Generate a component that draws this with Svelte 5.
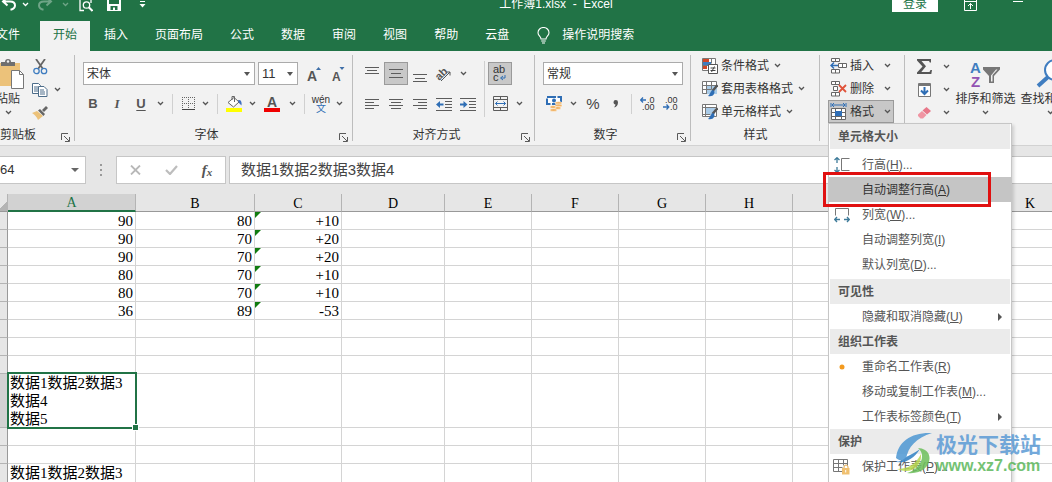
<script>
  const tabs = ['文件', '开始', '插入', '页面布局', '公式', '数据', '审阅', '视图', '帮助', '云盘'];
  let activeTab = $state('开始');
  let formula = $state('数据1数据2数据3数据4');
  let nameBox = $state('64');

  const columns = [
    { name: 'A', width: 128 },
    { name: 'B', width: 119 },
    { name: 'C', width: 87 },
    { name: 'D', width: 103 },
    { name: 'E', width: 87 },
    { name: 'F', width: 87 },
    { name: 'G', width: 87 },
    { name: 'H', width: 87 },
    { name: 'I', width: 107 },
    { name: 'J', width: 87 },
    { name: 'K', width: 87 }
  ];
  const tableWidth = columns.reduce((sum, c) => sum + c.width, 8);

  const rows = [
    ['90', '80', '+10'],
    ['90', '70', '+20'],
    ['90', '70', '+20'],
    ['80', '70', '+10'],
    ['80', '70', '+10'],
    ['36', '89', '-53'],
    [],
    [],
    [],
    ['数据1数据2数据3\n数据4\n数据5'],
    [],
    [],
    ['数据1数据2数据3\n数据4']
  ];
  const selectedRow = 9;

  const menu = [
    {
      title: '单元格大小',
      items: [
        { text: '行高', key: 'H', more: true, icon: 'rowHeight' },
        { text: '自动调整行高', key: 'A', hot: true },
        { text: '列宽', key: 'W', more: true, icon: 'colWidth' },
        { text: '自动调整列宽', key: 'I' },
        { text: '默认列宽', key: 'D', more: true }
      ]
    },
    { title: '可见性', items: [{ text: '隐藏和取消隐藏', key: 'U', sub: true }] },
    {
      title: '组织工作表',
      items: [
        { text: '重命名工作表', key: 'R', icon: 'dot' },
        { text: '移动或复制工作表', key: 'M', more: true },
        { text: '工作表标签颜色', key: 'T', sub: true }
      ]
    },
    { title: '保护', items: [{ text: '保护工作表', key: 'P', more: true, icon: 'protect' }] }
  ];
</script>

{#snippet chev()}
  <svg class="chev" width="7" height="5" viewBox="0 0 7 5"><path d="M1 1l2.5 2.5L6 1" fill="none" stroke="currentColor" stroke-width="1.3" /></svg>
{/snippet}

{#snippet drop(label)}
  <button class="drop" aria-label={label}>{@render chev()}</button>
{/snippet}

{#snippet lines(list)}
  <svg width="16" height="16" viewBox="0 0 16 16" shape-rendering="crispEdges">
    {#each list as [x, y, w]}
      <rect {x} {y} width={w} height="1" fill="#5c5c5c" />
    {/each}
  </svg>
{/snippet}

{#snippet footer(text, launcher)}
  <div class="footer">
    <span>{text}</span>
    {#if launcher}
      <button class="launcher" aria-label="{text}设置">
        <svg width="9" height="9" viewBox="0 0 9 9" fill="none" stroke="#5a5a5a"><path d="M.5 7V.5H7M3 3l5 5M8.500 4v4.500H4" /></svg>
      </button>
    {/if}
  </div>
{/snippet}

<div class="app">
  <header class="titlebar">
    <div class="titlerow">
      <div class="qat">
        <button class="w18" aria-label="撤消">
          <svg width="16" height="14" viewBox="0 0 16 14" fill="none" stroke="#fff" stroke-width="2"><path d="M6 .5L2 4.500l4.500 4M2.500 4.500H9c3 0 5 1.500 5 4 0 2-1.500 3.500-4.500 4.200" /></svg>
        </button>
        <button class="drop" aria-label="撤消列表">{@render chev()}</button>
        <button class="w26 dim" aria-label="恢复">
          <svg width="16" height="14" viewBox="0 0 16 14" fill="none" stroke="#fff" stroke-width="2"><path d="M10 .5l4 4-4.500 4M13.500 4.500H7c-3 0-5 1.500-5 4 0 2 1.500 3.500 4.500 4.200" /></svg>
        </button>
        <button class="drop dim" aria-label="恢复列表">{@render chev()}</button>
        <button class="w28" aria-label="打印预览">
          <svg width="14" height="16" viewBox="0 0 14 16" fill="none" stroke="#fff" stroke-width="1.300"><path d="M5 14.500H1V1h11v6" /><circle cx="7.500" cy="9" r="3.200" /><path d="M10 11.500l3.500 3.500" stroke-width="2" /></svg>
        </button>
        <button class="w28" aria-label="保存">
          <svg width="14" height="14" viewBox="0 0 14 14"><path d="M0 0h14v14H0zM2 1.500v5.500h10V1.500zM3.500 9v4H6v-2.500h2V13h2.500V9z" fill="#fff" fill-rule="evenodd" /></svg>
        </button>
        <button class="w28" aria-label="自定义快速访问工具栏">
          <svg width="7" height="7" viewBox="0 0 7 7" fill="#fff"><path d="M1 0h5v1H1zM.5 3h6l-3 3.500z" /></svg>
        </button>
      </div>
      <h1>工作簿1.xlsx&nbsp; -&nbsp; Excel</h1>
      <div class="winctl">
        <button class="login">登录</button>
        <button class="win" aria-label="功能区显示选项">
          <svg width="13" height="13" viewBox="0 0 13 13" fill="none" stroke="#fff"><path d="M.5.5h12v12H.5zM.5 3.500h12M6.500 11V5.500M4 8l2.500-2.500L9 8" /></svg>
        </button>
        <button class="win min" aria-label="最小化"><svg width="10" height="1" viewBox="0 0 10 1"><path d="M0 0h10v1H0z" fill="#fff" /></svg></button>
      </div>
    </div>
  </header>

  <nav class="tabs">
    {#each tabs as tab, i}
      <button class:active={tab === activeTab} class:file={i === 0} onclick={() => (activeTab = tab)}>{tab}</button>
    {/each}
    <button class="tell">
      <svg width="13" height="17" viewBox="0 0 13 17" fill="none" stroke="#fff" stroke-width="1.100"><path d="M4 12c0-2.500-3-3.200-3-6.300a5.500 5.200 0 0 1 11 0c0 3.100-3 3.800-3 6.300zM4.200 14h4.600M5 16h3" /></svg>
      <span>操作说明搜索</span>
    </button>
  </nav>

  <section class="ribbon">
    <div class="group clipboard">
      <div class="cols">
        <button class="big paste">
          <svg width="36" height="31" viewBox="0 0 36 31">
            <path d="M3 4h27v23H3z" fill="#ecc27a" />
            <path d="M11 6V3h4a3 3 0 0 1 6 0h4v4H11z" fill="#6f6f6f" /><circle cx="18" cy="2.500" r="1.200" fill="#f2f2f2" />
            <path d="M21.500 11.500h8l4 4v14h-12z" fill="#fff" stroke="#777" /><path d="M29.500 11.500v4h4" fill="none" stroke="#777" />
          </svg>
          <span>粘贴</span>
          {@render chev()}
        </button>
        <div class="stack">
          <div class="line">
            <button class="w20" aria-label="剪切">
              <svg width="15" height="16" viewBox="0 0 15 16" fill="none"><path d="M3 0l7 10M12 0L5 10" stroke="#666" stroke-width="1.800" /><circle cx="3.500" cy="12" r="2.700" stroke="#3f7dc0" stroke-width="1.300" /><circle cx="11" cy="12" r="2.700" stroke="#3f7dc0" stroke-width="1.300" /></svg>
            </button>
          </div>
          <div class="line">
            <button class="w20" aria-label="复制">
              <svg width="16" height="14" viewBox="0 0 16 14" fill="#fff" stroke="#4d6d8a"><path d="M.5.5h6l2 2v8h-8z" /><path d="M2 4h4M2 6h4M2 8h4" /><path d="M6.500 3.500h5.500l3 3v7H6.500z" /><path d="M8 7h4M8 9h5M8 11h5" /></svg>
            </button>
            {@render drop('复制选项')}
          </div>
          <div class="line">
            <button class="w20" aria-label="格式刷">
              <svg width="16" height="14" viewBox="0 0 16 14"><path d="M0 7l5-2 6 5-5 4c-1-3-3-5-6-7z" fill="#ecc27a" /><path d="M6 4.500L8 3l5 5-1.500 2zM10 4l4-4 2 2-4 4z" fill="#666" /></svg>
            </button>
          </div>
        </div>
      </div>
      {@render footer('剪贴板', true)}
    </div>

    <div class="group font">
      <div class="rows">
        <div class="line selects">
          <span class="select grow"><select aria-label="字体"><option>宋体</option></select></span>
          <span class="select size"><select aria-label="字号"><option>11</option></select></span>
          <button class="w26" aria-label="增大字号">
            <svg width="16" height="16" viewBox="0 0 16 16"><text x="1" y="15" class="glyph" font-size="14">A</text><path d="M10 4l2.500-3L15 4z" fill="#3f6fa8" /></svg>
          </button>
          <button class="w22" aria-label="减小字号">
            <svg width="14" height="16" viewBox="0 0 14 16"><text x="1" y="15" class="glyph" font-size="12">A</text><path d="M8.500 1h5L11 4z" fill="#3f6fa8" /></svg>
          </button>
        </div>
        <div class="line">
          <button class="w24 letter"><b>B</b></button>
          <button class="w24 letter italic"><b>I</b></button>
          <button class="w24 letter"><b class="under">U</b></button>
          {@render drop('下划线选项')}
          <i class="sep"></i>
          <button class="w20" aria-label="边框">
            <svg width="13" height="13" viewBox="0 0 13 13" fill="none" stroke="#666" shape-rendering="crispEdges"><path d="M.5 0v12M6.500 0v12M12.500 0v12M0 .5h13M0 6.500h13" stroke-dasharray="1 1" /><path d="M0 12.500h13" stroke="#444" /></svg>
          </button>
          {@render drop('边框选项')}
          <i class="sep"></i>
          <button class="w22" aria-label="填充颜色">
            <svg width="17" height="17" viewBox="0 0 17 17"><path d="M2 7.500l6-5 5 4.500-5.500 5z" fill="#fff" stroke="#666" /><path d="M6 5V1.500h2.500V7" fill="none" stroke="#666" /><path d="M12 5c3-.5 4 1.500 3.500 5.500L13 8z" fill="#3f6fc0" /><path d="M0 13h16v4H0z" fill="#ff0" /></svg>
          </button>
          {@render drop('填充选项')}
          <button class="w26" aria-label="字体颜色">
            <svg width="16" height="17" viewBox="0 0 16 17"><text x="3" y="12" class="glyph" font-size="14">A</text><path d="M0 13h16v4H0z" fill="#f00000" /></svg>
          </button>
          {@render drop('字体颜色选项')}
          <i class="sep"></i>
          <button class="w22 pinyin"><span>wén</span><span class="wen">文</span></button>
          {@render drop('拼音选项')}
        </div>
      </div>
      {@render footer('字体', true)}
    </div>

    <div class="group align">
      <div class="cols">
        <div class="rows">
          <div class="line">
            <button class="w24" aria-label="顶端对齐">{@render lines([[1, 1, 14], [3, 4, 10], [1, 7, 14]])}</button>
            <button class="w24 toggled" aria-label="垂直居中">{@render lines([[1, 3, 14], [3, 7, 10], [1, 11, 14]])}</button>
            <button class="w24" aria-label="底端对齐">{@render lines([[1, 8, 14], [3, 12, 10], [1, 15, 14]])}</button>
            <button class="w24" aria-label="方向">
              <svg width="18" height="18" viewBox="0 0 18 18"><text x="0" y="12" transform="rotate(-45 7 9)" class="glyph" font-size="11">ab</text><path d="M6 16L15 7M11.500 7H15v3.500" fill="none" stroke="#555" /></svg>
            </button>
            {@render drop('方向选项')}
          </div>
          <div class="line">
            <button class="w24" aria-label="左对齐">{@render lines([[1, 3, 14], [1, 6, 9], [1, 9, 14], [1, 12, 9]])}</button>
            <button class="w24" aria-label="居中">{@render lines([[1, 3, 14], [3, 6, 10], [1, 9, 14], [3, 12, 10]])}</button>
            <button class="w24" aria-label="右对齐">{@render lines([[1, 3, 14], [6, 6, 9], [1, 9, 14], [6, 12, 9]])}</button>
            <button class="w24" aria-label="减少缩进量">
              <svg width="16" height="14" viewBox="0 0 16 14"><path d="M0 1.500h16M9 4.500h7M9 7.500h7M9 10.500h7M0 13.500h16" stroke="#5c5c5c" /><path d="M0 7.500l4-3.500v2.500h3.500v2H4V11z" fill="#2f6eb5" /></svg>
            </button>
            <button class="w24" aria-label="增加缩进量">
              <svg width="16" height="14" viewBox="0 0 16 14"><path d="M0 1.500h16M9 4.500h7M9 7.500h7M9 10.500h7M0 13.500h16" stroke="#5c5c5c" /><path d="M7.500 7.500L3.500 4v2.500H0v2h3.500V11z" fill="#2f6eb5" /></svg>
            </button>
          </div>
        </div>
        <i class="sep tall"></i>
        <div class="rows">
          <div class="line">
            <button class="w24 toggled" aria-label="自动换行">
              <svg width="16" height="18" viewBox="0 0 16 18"><text x="1" y="8" class="glyph light" font-size="11">ab</text><text x="1" y="16" class="glyph light" font-size="11">c</text><path d="M13 10v3H9M11 11l-2.500 2 2.500 2" fill="none" stroke="#2f6eb5" /></svg>
            </button>
          </div>
          <div class="line">
            <button class="w24" aria-label="合并后居中">
              <svg width="15" height="15" viewBox="0 0 15 15" fill="none" stroke="#5c5c5c"><path d="M.5.5h14v14H.5zM.5 3.500h14M.5 11.500h14M7.500.5v3M7.500 11.500v3" /><path d="M2.500 7.500h10M4.500 5.500l-2 2 2 2M10.500 5.500l2 2-2 2" stroke="#2f6eb5" /></svg>
            </button>
            {@render drop('合并选项')}
          </div>
        </div>
      </div>
      {@render footer('对齐方式', true)}
    </div>

    <div class="group number">
      <div class="rows">
        <div class="line selects">
          <span class="select grow"><select aria-label="数字格式"><option>常规</option></select></span>
        </div>
        <div class="line">
          <button class="w24" aria-label="会计数字格式">
            <svg width="17" height="16" viewBox="0 0 17 16"><path d="M1 1h14v7H1z" fill="#fff" stroke="#2f6eb5" stroke-width="2" stroke-dasharray="9 1.500" /><circle cx="8" cy="4.500" r="2" fill="#2f6eb5" /><g fill="#f2b568" stroke="#fff" stroke-width=".5"><ellipse cx="12.500" cy="7" rx="3.500" ry="1.500" /><ellipse cx="12.500" cy="9.500" rx="3.500" ry="1.500" /><ellipse cx="11.500" cy="12" rx="3.500" ry="1.500" /><ellipse cx="7" cy="11" rx="3" ry="1.500" /><ellipse cx="7.500" cy="14" rx="3.500" ry="1.500" /></g></svg>
          </button>
          {@render drop('会计格式选项')}
          <button class="w26 percent">%</button>
          <button class="w20" aria-label="千位分隔样式">
            <svg width="6" height="8" viewBox="0 0 6 8"><path d="M.5 2.300a2.200 2.200 0 0 1 4.500 0C5 5 3.500 7 1.500 7.500 1 6.500 2.500 6 2.500 4.500 1.200 4.500.5 3.500.5 2.300z" fill="#555" /></svg>
          </button>
          <i class="sep"></i>
          <button class="w22" aria-label="增加小数位数">
            <svg width="16" height="15" viewBox="0 0 16 15"><text x="7" y="7" class="dec">.0</text><text x="2" y="14" class="dec">.00</text><path d="M6 4H1M3 1.500L.700 4 3 6.500" fill="none" stroke="#2f6eb5" stroke-width="1.300" /></svg>
          </button>
          <button class="w24" aria-label="减少小数位数">
            <svg width="16" height="15" viewBox="0 0 16 15"><text x="2" y="7" class="dec">.00</text><text x="7" y="14" class="dec">.0</text><path d="M0 11h5.500M3.500 8.500L5.800 11l-2.300 2.500" fill="none" stroke="#2f6eb5" stroke-width="1.300" /></svg>
          </button>
        </div>
      </div>
      {@render footer('数字', true)}
    </div>

    <div class="group styles">
      <div class="stack">
        <button class="cmd">
          <svg width="16" height="16" viewBox="0 0 16 16" fill="none" stroke="#777"><path d="M.5.5h13v12H.5z" fill="#fff" /><path d="M1 1h6v3H1zM1 8h4v3H1z" fill="#d24726" stroke="none" /><path d="M1 4h8v3H1z" fill="#3f7dc0" stroke="none" /><path d="M9.500.5v5M.5 7.500h6" /><path d="M6.500 6.500h9v9h-9z" fill="#fff" stroke="#555" /><path d="M8.500 10h5M8.500 12.500h5M12.500 8.500l-3 5.500" stroke="#444" /></svg>
          <span>条件格式</span>{@render chev()}
        </button>
        <button class="cmd">
          <svg width="16" height="16" viewBox="0 0 16 16" fill="none" stroke="#777"><path d="M.5.5h14v12H.5z" fill="#fff" /><path d="M5 4h10v9H5z" fill="#a9cbe8" stroke="none" /><path d="M.5 4.500h14M.5 8.500h9M4.500.5v12M9.500.5v8" /><path d="M15.500 4l-5 6" stroke="#555" stroke-width="2.500" /><path d="M10.500 9c2 .5 2.500 2 1.500 4-1 2-3 2.500-6 2 2-1.500 2-4 4.500-6z" fill="#2f6eb5" stroke="none" /></svg>
          <span>套用表格格式</span>{@render chev()}
        </button>
        <button class="cmd">
          <svg width="16" height="16" viewBox="0 0 16 16" fill="none" stroke="#777"><path d="M.5.5h14v12H.5z" fill="#fff" /><path d="M4 4h9v6H4z" fill="#a9cbe8" stroke="none" /><path d="M.5 3.500h14M3.500.5v12M.5 10.500h8" /><path d="M15.500 4l-5 6" stroke="#555" stroke-width="2.500" /><path d="M10.500 9c2 .5 2.500 2 1.500 4-1 2-3 2.500-6 2 2-1.500 2-4 4.500-6z" fill="#2f6eb5" stroke="none" /></svg>
          <span>单元格样式</span>{@render chev()}
        </button>
      </div>
      {@render footer('样式', false)}
    </div>

    <div class="group cells">
      <div class="stack">
        <button class="cmd">
          <svg width="17" height="16" viewBox="0 0 17 16" fill="#fff" stroke="#666"><path d="M1.500.5h8v3h-8zM5.500.5v3M1.500 11.500h8v3.500h-8zM5.500 11.500v3.500M8.500 5.500h8v4h-8zM12.500 5.500v4" /><path d="M8 7.500H1M4 4.500l-3 3 3 3" fill="none" stroke="#2f6eb5" stroke-width="1.500" /></svg>
          <span>插入</span>{@render chev()}
        </button>
        <button class="cmd">
          <svg width="17" height="16" viewBox="0 0 17 16" fill="#fff" stroke="#666"><path d="M1.500.5h8v3h-8zM5.500.5v3M1.500 11.500h8v3.500h-8zM5.500 11.500v3.500M3.500 5.500h4v4h-4z" /><path d="M9 4l7 7M16 4l-7 7" stroke="#e0533a" stroke-width="1.800" /></svg>
          <span>删除</span>{@render chev()}
        </button>
        <div class="format">
          <button class="cmd pressed" aria-haspopup="menu" aria-expanded="true">
            <svg width="17" height="17" viewBox="0 0 17 17" fill="none" stroke="#666"><path d="M1.500 5.500h14v11h-14z" fill="#fff" /><path d="M1.500 9.500h14M1.500 13.500h14M5.500 5.500v11M11.500 5.500v11" /><path d="M5 8h7v5H5z" fill="#2f6eb5" stroke="none" /><path d="M2 2h13M4 0L2 2l2 2M13 0l2 2-2 2M1 0v4M16 0v4" stroke="#2f6eb5" /></svg>
            <span>格式</span>{@render chev()}
          </button>
          <div class="menu" role="menu">
            {#each menu as section}
              <h2>{section.title}</h2>
              <div class="items">
                {#each section.items as item}
                  <button role="menuitem" class:hot={item.hot}>
                    <span class="mi">
                      {#if item.icon === 'rowHeight'}
                        <svg width="16" height="16" viewBox="0 0 16 16" fill="none"><path d="M15.500 1.500h-8v12h8" stroke="#777" /><path d="M3 1v5M.5 3L3 .700 5.500 3M3 10v5M.5 13L3 15.300 5.500 13" stroke="#3d7a99" stroke-width="1.300" /></svg>
                      {:else if item.icon === 'colWidth'}
                        <svg width="16" height="16" viewBox="0 0 16 16" fill="none"><path d="M1.500 8.500v-7h13v7" stroke="#777" /><path d="M1 12.500h5M3 10L.700 12.500 3 15M10 12.500h5M13 10l2.300 2.500L13 15" stroke="#3d7a99" stroke-width="1.300" /></svg>
                      {:else if item.icon === 'dot'}
                        <svg width="6" height="6" viewBox="0 0 6 6"><circle cx="3" cy="3" r="2.500" fill="#f39a1e" /></svg>
                      {:else if item.icon === 'protect'}
                        <svg width="17" height="16" viewBox="0 0 17 16" fill="none" stroke="#777"><path d="M9 12.500H.5V.5h14v6M.5 4.500h14M.5 8.500h9M5.500.5v12M10.500.5v6" /><path d="M11 9.500V8a2 2 0 0 1 4 0v1.500" stroke="#e0a84a" /><path d="M9 9h7.500v6.500H9z" fill="#f0c070" stroke="none" /><path d="M12.700 11v2.500" stroke="#fff" /></svg>
                      {/if}
                    </span>
                    <span class="mt">{item.text}(<u>{item.key}</u>){item.more ? '...' : ''}</span>
                    {#if item.sub}<i class="arrow"></i>{/if}
                    {#if item.hot}<i class="frame"></i>{/if}
                  </button>
                {/each}
              </div>
            {/each}
          </div>
        </div>
      </div>
    </div>

    <div class="group edit">
      <div class="stack">
        <div class="line">
          <button class="w30" aria-label="自动求和">
            <svg width="15" height="15" viewBox="0 0 15 15"><path d="M0 0h14v3.500h-1.200L12 2H4.500L9 7.300 4.300 13H12.500l1-2H15l-.7 4H0v-1.500L5.500 7.500 0 1.500z" fill="#555" /></svg>
          </button>
          {@render drop('求和选项')}
        </div>
        <div class="line">
          <button class="w30" aria-label="填充">
            <svg width="13" height="14" viewBox="0 0 13 14"><path d="M.5.5h12v13H.5z" fill="#fff" stroke="#777" /><path d="M1 1h11v2H1z" fill="#777" /><path d="M6.500 4v7M3 7.500L6.500 11 10 7.500" fill="none" stroke="#2f6eb5" stroke-width="2" /></svg>
          </button>
          {@render drop('填充选项')}
        </div>
        <div class="line">
          <button class="w30" aria-label="清除">
            <svg width="13" height="12" viewBox="0 0 13 12"><path d="M8.500 0L13 4 9 7.500 4.500 3.500z" fill="#e8788a" /><path d="M4 4l4.500 4L5 11.500H2.500L0 9V7.500z" fill="#f095a3" /></svg>
          </button>
          {@render drop('清除选项')}
        </div>
      </div>
      <button class="big sort">
        <svg width="32" height="31" viewBox="0 0 32 31"><text x="0" y="14" font-size="15" font-weight="bold" fill="#3f7dc0" font-family="Liberation Sans, sans-serif">A</text><text x="1" y="28" font-size="15" font-weight="bold" fill="#9352b3" font-family="Liberation Sans, sans-serif">Z</text><path d="M13 8h17v2.500l-6 6.500v7h-5v-7l-6-6.500z" fill="#777" /><path d="M21 16.500v6h1.500V16l5-5.500H26z" fill="#f2f2f2" /></svg>
        <span>排序和筛选</span>
        {@render chev()}
      </button>
      <button class="big find">
        <svg width="32" height="31" viewBox="0 0 32 31" fill="none" stroke="#3f7dc0"><circle cx="20" cy="11" r="10" fill="#fff" stroke-width="2" /><path d="M13 18L3 27" stroke-width="4" /></svg>
        <span>查找和选择</span>
        {@render chev()}
      </button>
    </div>
  </section>

  <section class="formulabar">
    <label class="namebox"><input aria-label="名称框" bind:value={nameBox} /></label>
    <span class="grip"><i></i><i></i><i></i></span>
    <div class="fxbox">
      <button aria-label="取消"><svg width="11" height="10" viewBox="0 0 11 10"><path d="M1 .5l9 9M10 .5l-9 9" stroke="#b8b8b8" stroke-width="1.800" /></svg></button>
      <button aria-label="输入"><svg width="13" height="10" viewBox="0 0 13 10"><path d="M1 5l4 4L12 1" fill="none" stroke="#bdbdbd" stroke-width="2.200" /></svg></button>
      <button class="fx" aria-label="插入函数">f<small>x</small></button>
    </div>
    <input class="formula" aria-label="编辑栏" bind:value={formula} />
  </section>

  <main class="sheet">
    <table style:width="{tableWidth}px">
      <colgroup>
        <col style:width="8px" />
        {#each columns as col}<col style:width="{col.width}px" />{/each}
      </colgroup>
      <thead>
        <tr>
          <th class="corner"></th>
          {#each columns as col, i}<th class:on={i === 0}>{col.name}</th>{/each}
        </tr>
      </thead>
      <tbody>
        {#each rows as row, r}
          <tr>
            <th class:on={r === selectedRow}></th>
            {#each columns as col, c}
              <td class:num={r < selectedRow} class:flag={c === 2 && row[2]} class:selected={r === selectedRow && c === 0}>{row[c] ?? ''}</td>
            {/each}
          </tr>
        {/each}
      </tbody>
    </table>
  </main>

  <aside class="mark">
    <svg width="44" height="44" viewBox="0 0 44 44">
      <path d="M40 1C20 0 6 9 4 26c3 3 7 3 10 1C16 15 24 6 40 1z" fill="#4d97d3" />
      <path d="M1 29c10 4 20-1 27-12-8 6-12 6-16 10-4 3-8 3-11 2z" fill="#2f7fc4" />
      <path d="M26 16c8 6 4 20-11 25 15 2 25-8 22-18-1-4-6-7-11-7z" fill="#6cbf5a" />
      <path d="M5 37c11 0 19-5 24-15 1 12-9 21-24 15z" fill="#b9d84e" />
    </svg>
    <div><strong>极光下载站</strong><span>www.xz7.com</span></div>
  </aside>
</div>

<style>
  :global(body) {
    margin: 0;
    overflow: hidden;
  }
  .app {
    position: relative;
    height: 100vh;
    overflow: hidden;
    display: flex;
    flex-direction: column;
    background: #fff;
    color: #333;
    font: 12px/16px 'Liberation Sans', 'Noto Sans CJK SC', sans-serif;
  }
  button, input, select {
    font: inherit;
    color: inherit;
    border: 0;
    margin: 0;
    padding: 0;
    background: none;
    box-sizing: border-box;
  }
  button {
    display: flex;
    align-items: center;
    justify-content: center;
    flex: none;
    white-space: nowrap;
  }
  svg {
    display: block;
    flex: none;
  }
  .chev { color: #555; }

  .titlebar {
    height: 21px;
    flex: none;
    display: flex;
    align-items: flex-end;
    overflow: hidden;
    background: #217346;
    color: #fff;
  }
  .titlerow {
    flex: 1;
    height: 34px;
    display: grid;
    grid-template-columns: 1fr auto 1fr;
    align-items: center;
  }
  .titlerow .chev { color: #fff; }
  .dim { opacity: 0.35; }
  .qat, .winctl {
    display: flex;
    align-items: center;
  }
  .winctl {
    justify-content: flex-end;
    padding-right: 11px;
  }
  h1 {
    margin: 0;
    padding-left: 60px;
    font-size: 12px;
    font-weight: normal;
  }
  .login {
    width: 46px;
    height: 16px;
    margin-right: 9px;
    background: #fff;
    color: #217346;
  }
  .win { width: 47px; height: 14px; }
  .min { align-items: flex-start; padding-top: 4px; }

  .tabs {
    display: flex;
    gap: 1px;
    flex: none;
    height: 30px;
    margin-left: -17px;
    background: #217346;
    color: #fff;
  }
  .tabs button { padding: 0 13px 2px; }
  .tabs .file { margin-right: 6px; }
  .tabs .active {
    background: #f2f2f2;
    color: #217346;
  }
  .tabs .tell { gap: 12px; padding-left: 14px; }

  .ribbon {
    display: flex;
    flex: none;
    height: 94px;
    margin-left: -24px;
    background: #f2f2f2;
    border-bottom: 1px solid #d2d2d2;
  }
  .group {
    position: relative;
    display: flex;
    flex-direction: column;
    flex: none;
    box-sizing: border-box;
    padding-top: 8px;
  }
  .group:not(.edit)::after {
    content: '';
    position: absolute;
    right: 0;
    top: 4px;
    bottom: 4px;
    width: 1px;
    background: #bdbdbd;
  }
  .clipboard { width: 99px; }
  .font { width: 278px; padding-left: 6px; }
  .align { width: 182px; padding-left: 7px; }
  .number { width: 156px; padding-left: 7px; }
  .styles { width: 129px; padding-left: 11px; }
  .cells { width: 85px; padding-left: 8px; }
  .edit {
    flex: 1;
    flex-direction: row;
    min-width: 0;
  }
  .footer {
    display: flex;
    align-items: center;
    height: 20px;
    margin-top: auto;
  }
  .footer span { flex: 1; text-align: center; }
  .launcher { width: 15px; padding: 4px 4px 0 0; }
  .font .footer { margin-left: -6px; }
  .align .footer, .number .footer { margin-left: -7px; }
  .styles .footer { margin-left: -11px; }
  .cols, .line { display: flex; align-items: center; }
  .cols { align-items: flex-start; }
  .rows {
    display: grid;
    gap: 5px;
    padding-top: 2px;
  }
  .rows .line { height: 25px; }
  .stack { margin-top: -4px; }
  .stack .line { height: 23px; }
  .line button { height: 23px; }
  .selects { padding-left: 2px; gap: 3px; }
  .font .selects { padding-right: 5px; }
  .number .selects { padding-left: 1px; }
  .selects button + button { margin-left: -3px; }
  .select {
    display: grid;
    align-items: center;
    height: 23px;
    box-sizing: border-box;
    border: 1px solid #ababab;
    background: #fff;
  }
  .select::after {
    content: '';
    grid-area: 1 / 1;
    justify-self: end;
    margin-right: 4px;
    border: 3px solid transparent;
    border-top: 4px solid #555;
    border-bottom: 0;
    pointer-events: none;
  }
  .select select {
    grid-area: 1 / 1;
    width: 100%;
    padding-left: 3px;
    appearance: none;
  }
  .font .grow { width: 172px; }
  .number .grow { width: 140px; }
  .size { width: 40px; }
  .size select { font-size: 13px; }
  .w18 { width: 18px; }
  .w20 { width: 20px; }
  .w22 { width: 22px; }
  .w24 { width: 24px; }
  .w26 { width: 26px; }
  .w28 { width: 28px; }
  .w30 { width: 30px; }
  .drop { width: 14px; }
  .sep {
    width: 1px;
    height: 20px;
    margin: 0 5px;
    background: #d0d0d0;
  }
  .sep.tall { height: 56px; margin: 2px 3px 0 4px; }
  .toggled {
    background: #c8c8c8;
    border: 1px solid #9a9a9a;
  }
  .glyph {
    font-family: 'Liberation Sans', sans-serif;
    font-weight: bold;
    fill: #555;
  }
  .light { font-weight: normal; fill: #333; }
  .dec {
    font-family: 'Liberation Sans', sans-serif;
    font-size: 9px;
    fill: #333;
  }
  .letter { font-size: 13px; color: #555; }
  .italic { font-family: 'Liberation Serif', serif; font-style: italic; }
  .under { text-decoration: underline; text-underline-offset: 2px; }
  .percent { font-size: 15px; color: #444; }
  .pinyin {
    flex-direction: column;
    font-size: 10px;
    line-height: 9px;
  }
  .wen { color: #2f6eb5; }
  .big {
    flex-direction: column;
    justify-content: flex-start;
  }
  .big span { margin: 1px 0 3px; }
  .paste { width: 44px; margin-left: 10px; }
  .sort { width: 65px; }
  .find { width: 65px; }
  .cmd {
    height: 23px;
    gap: 3px;
    padding: 0 2px;
    justify-content: flex-start;
  }
  .cmd .chev { margin-left: 2px; }
  .styles .cmd { margin-left: -2px; }
  .cells .cmd { width: 66px; }
  .cells .cmd .chev { margin-left: auto; margin-right: 1px; }
  .styles .stack, .cells .stack { margin-top: -5px; }
  .cells .pressed {
    background: #c8c8c8;
    border: 1px solid #9a9a9a;
    padding: 0 1px;
  }
  .edit .line { padding-left: 4px; }

  .format { position: relative; }
  .menu {
    position: absolute;
    z-index: 5;
    top: 100%;
    left: 0;
    width: 184px;
    box-sizing: border-box;
    border: 1px solid #c6c6c6;
    padding-bottom: 8px;
    background: #fff;
    color: #555;
    box-shadow: 2px 2px 3px rgba(0, 0, 0, 0.15);
  }
  .menu h2 {
    height: 25px;
    margin: 0 1px;
    padding-left: 8px;
    font-size: 12px;
    line-height: 27px;
    background: #ebebeb;
  }
  .items:nth-of-type(1) { padding: 3px 0 2px; }
  .menu button {
    position: relative;
    width: 100%;
    height: 25px;
    justify-content: flex-start;
  }
  .menu .hot { background: #c5c5c5; color: #333; }
  .mi {
    width: 25px;
    margin-right: 8px;
    display: flex;
    justify-content: center;
  }
  .mt { flex: 1; text-align: left; }
  .arrow {
    margin-right: 9px;
    border: 4px solid transparent;
    border-left: 4px solid #555;
    border-right: 0;
  }
  .frame {
    position: absolute;
    inset: -5px 20px -5px -6px;
    border: 3px solid #e01010;
  }

  .formulabar {
    display: flex;
    flex: none;
    padding: 10px 0 0;
    height: 38px;
    box-sizing: border-box;
    background: #e6e6e6;
  }
  .namebox, .fxbox, .formula {
    box-sizing: border-box;
    border: 1px solid #c6c6c6;
    background: #fff;
  }
  .namebox {
    display: flex;
    align-items: center;
    width: 86px;
    border-left: 0;
  }
  .namebox input { width: 68px; font-size: 13px; }
  .namebox::after {
    content: '';
    margin-left: 3px;
    border: 4px solid transparent;
    border-top: 4px solid #666;
    border-bottom: 0;
  }
  .grip {
    width: 30px;
    display: flex;
    flex-direction: column;
    align-items: center;
    justify-content: center;
    gap: 3px;
  }
  .grip i { width: 2px; height: 2px; background: #999; }
  .fxbox {
    display: flex;
    width: 110px;
    margin-right: 3px;
  }
  .fxbox button { width: 36px; }
  .fxbox .fx {
    font: italic bold 15px 'Liberation Serif', serif;
    color: #555;
  }
  .fx small { font-size: 11px; align-self: flex-end; padding-bottom: 5px; }
  .formula {
    flex: 1;
    min-width: 0;
    padding-left: 11px;
    border-right: 0;
    font-size: 15px;
    color: #444;
  }

  .sheet {
    flex: 1;
    min-height: 0;
    overflow: hidden;
    background: linear-gradient(#e6e6e6 20px, #fff 20px);
    padding-top: 10px;
  }
  table {
    table-layout: fixed;
    border-spacing: 0;
    color: #000;
    font: 15px/18px 'Liberation Serif', 'Noto Sans CJK SC', serif;
  }
  th, td { padding: 0; box-sizing: border-box; }
  th { font-weight: normal; background: #e6e6e6; }
  thead th {
    height: 18px;
    padding-top: 2px;
    font-size: 14px;
    line-height: 15px;
    border-right: 1px solid #b4b4b4;
    border-bottom: 1px solid #999;
  }
  thead .on {
    padding-top: 1px;
    background: #d2d2d2;
    color: #217346;
    border-bottom: 2px solid #217346;
  }
  thead .corner {
    background: linear-gradient(135deg, #e6e6e6 60%, #b4b4b4 60%);
  }
  tbody th {
    border-right: 1px solid #999;
    border-bottom: 1px solid #b4b4b4;
  }
  tbody .on { background: #d2d2d2; }
  td {
    position: relative;
    height: 18px;
    line-height: 18px;
    border-right: 1px solid #d4d4d4;
    border-bottom: 1px solid #d4d4d4;
    padding: 0 2px;
    vertical-align: top;
    white-space: pre;
  }
  .num {
    padding-top: 2px;
    line-height: 15px;
    text-align: right;
  }
  td.selected {
    z-index: 1;
    height: 54px;
    border-bottom: 0;
  }
  .selected::before {
    content: '';
    position: absolute;
    inset: -2px -2px -1px -1px;
    border: 2px solid #217346;
  }
  .selected::after {
    content: '';
    position: absolute;
    right: -4px;
    bottom: -3px;
    width: 5px;
    height: 5px;
    background: #217346;
    border: 1px solid #fff;
  }
  .flag::before {
    content: '';
    position: absolute;
    left: 0;
    top: 0;
    border-top: 6px solid #107c10;
    border-right: 6px solid transparent;
  }

  .mark {
    position: absolute;
    z-index: 6;
    right: 11px;
    bottom: 6px;
    display: flex;
    align-items: center;
    opacity: 0.85;
  }
  .mark div { display: grid; }
  .mark strong {
    font-size: 21px;
    line-height: 24px;
    color: #5b9bd5;
  }
  .mark span {
    font-size: 16px;
    font-weight: bold;
    line-height: 18px;
    color: #5cb85c;
  }
</style>
